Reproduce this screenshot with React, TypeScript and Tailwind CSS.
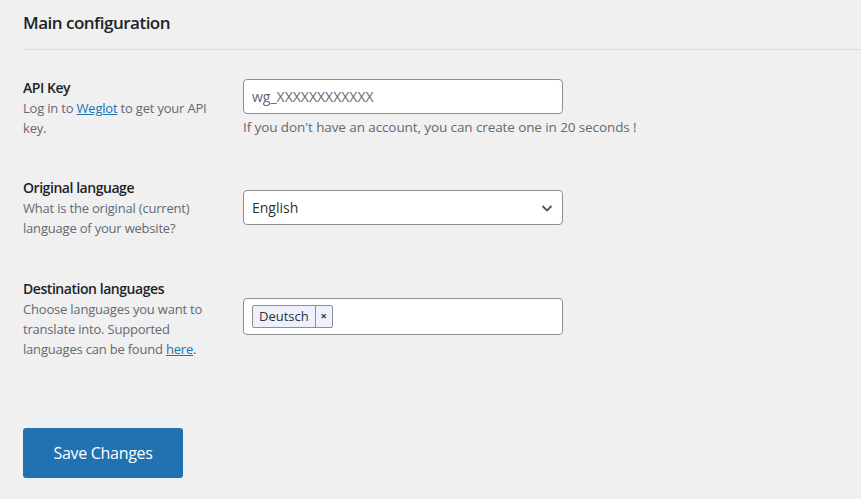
import React from "react";

function Label({ title, children }: { title: string; children: React.ReactNode }) {
  return (
    <div className="w-[220px] shrink-0 pr-[20px]">
      <div className="text-[14px] leading-[20px] font-semibold tracking-[-0.45px] text-[#1d2327]">{title}</div>
      <div className="text-[13px] leading-[20px] tracking-[-0.2px] text-[#646970]">{children}</div>
    </div>
  );
}

export default function App() {
  return (
    <div className="min-h-screen bg-[#f0f0f1] font-['Open_Sans',sans-serif] text-[#3c434a] overflow-hidden">
      <div className="pl-[23px]">
        <h2 className="pt-[11px] h-[49px] text-[17px] leading-[23px] font-semibold tracking-[-0.5px] text-[#1d2327]">
          Main configuration
        </h2>
        <div className="h-px bg-[#dcdcde]" />

        {/* API key */}
        <div className="flex mt-[28px]">
          <Label title="API Key">
            Log in to{" "}
            <a href="#" className="text-[#2271b1] underline">
              Weglot
            </a>{" "}
            to get your API key.
          </Label>
          <div className="pt-[1px]">
            <div className="w-[320px] h-[35px] bg-white border border-[#8c8f94] rounded-[4px] flex items-center px-[8px] text-[14px] text-[#646970]">
              wg_XXXXXXXXXXXX
            </div>
            <p className="mt-[4px] text-[13.5px] leading-[18px] tracking-[-0.1px] text-[#646970]">
              If you don't have an account, you can create one in 20 seconds !
            </p>
          </div>
        </div>

        {/* Original language */}
        <div className="flex mt-[40px]">
          <Label title="Original language">What is the original (current) language of your website?</Label>
          <div className="pt-[12px]">
            <div className="w-[320px] h-[35px] bg-white border border-[#8c8f94] rounded-[4px] flex items-center justify-between pl-[8px] pr-[8px] text-[14px] text-[#2c3338]">
              <span>English</span>
              <svg width="14" height="14" viewBox="0 0 14 14" fill="none">
                <polyline points="2.5,5 7,9.5 11.5,5" stroke="#50575e" strokeWidth="1.8" />
              </svg>
            </div>
          </div>
        </div>

        {/* Destination languages */}
        <div className="flex mt-[41px]">
          <Label title="Destination languages">
            Choose languages you want to translate into. Supported languages can be found{" "}
            <a href="#" className="text-[#2271b1] underline">
              here
            </a>
            .
          </Label>
          <div className="pt-[19px]">
            <div className="w-[320px] h-[37px] bg-white border border-[#8c8f94] rounded-[4px] flex items-center px-[8px]">
              <div className="flex h-[23px] border border-[#8c8f94] bg-[#eef0fc] rounded-[2px] text-[13px] text-[#2c3338]">
                <span className="px-[6px] flex items-center border-r border-[#8c8f94]">Deutsch</span>
                <span className="w-[16px] flex items-center justify-center text-[11px] font-bold">×</span>
              </div>
            </div>
          </div>
        </div>

        <button className="mt-[69px] w-[160px] h-[50px] bg-[#2271b1] rounded-[3px] text-white text-[16px] tracking-[-0.3px]">
          Save Changes
        </button>
      </div>
    </div>
  );
}
